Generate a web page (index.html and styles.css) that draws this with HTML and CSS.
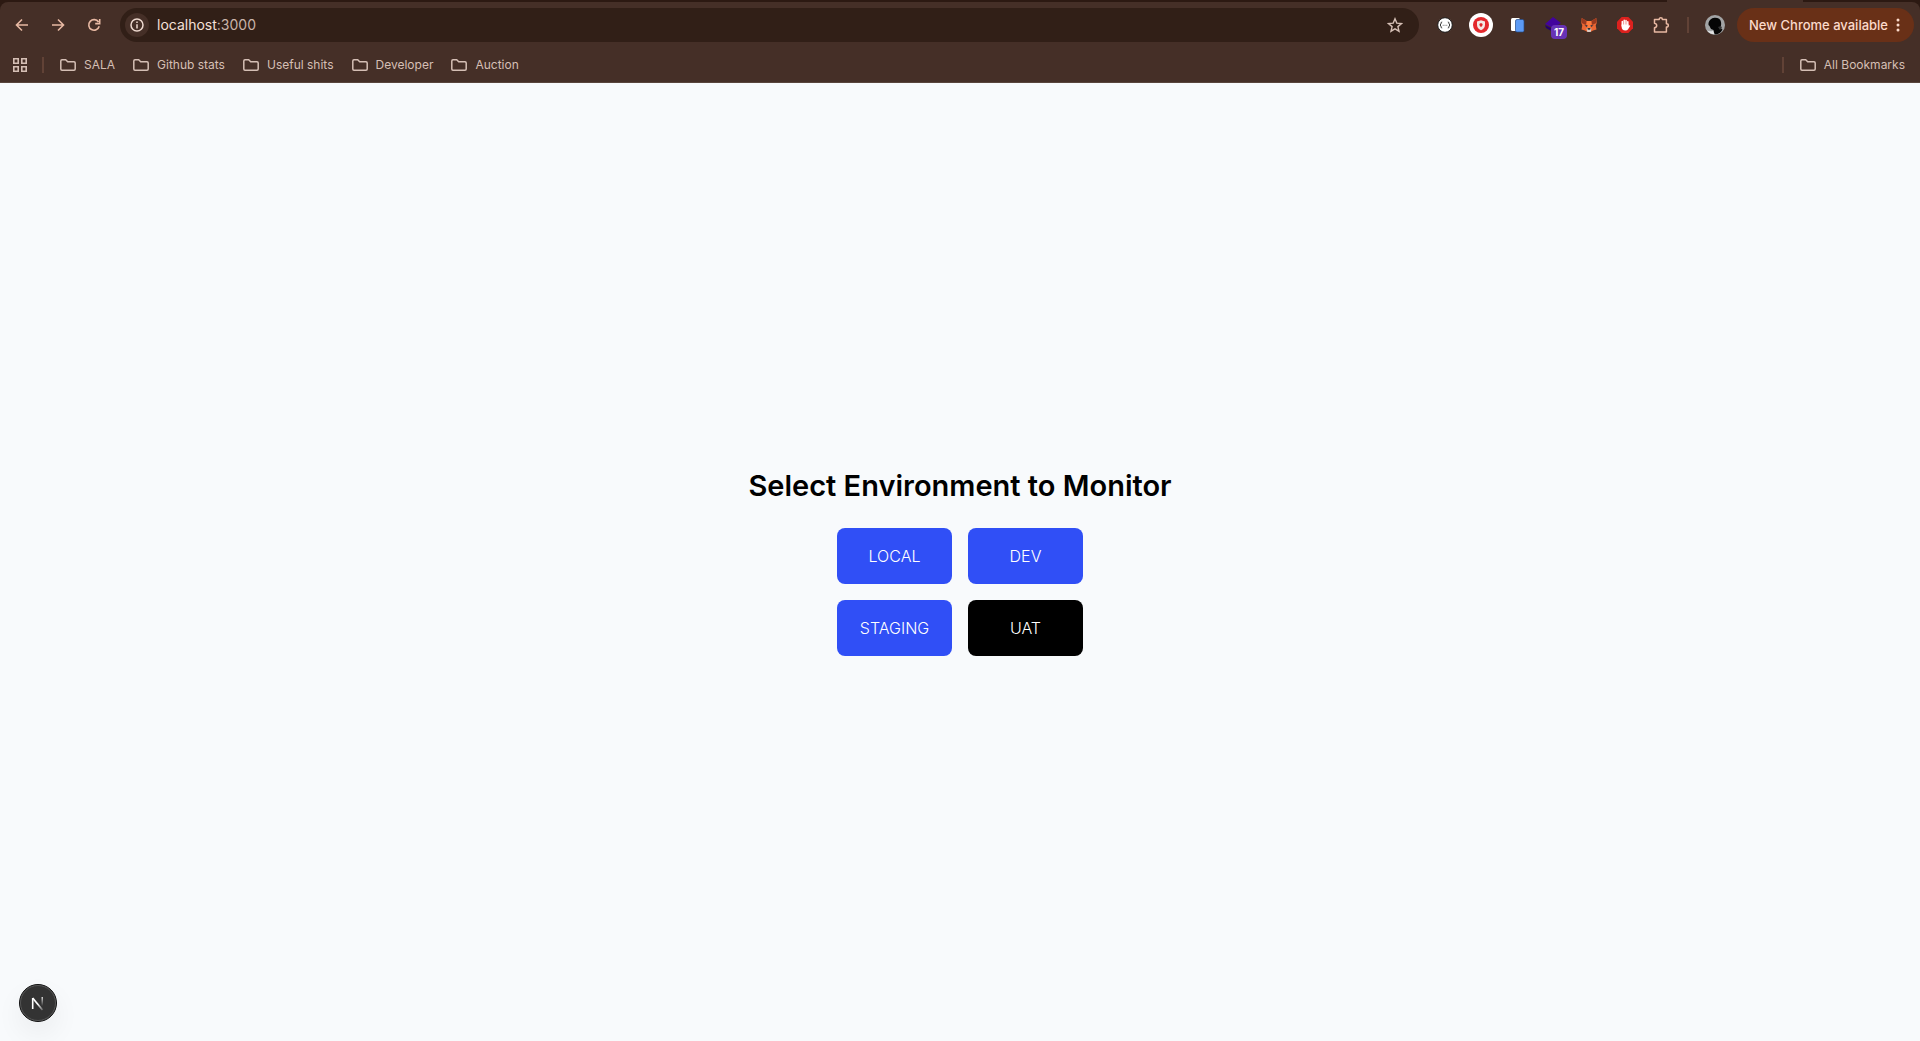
FILE: index.html
```html
<!DOCTYPE html>
<html lang="en">
<head>
<meta charset="utf-8">
<meta name="viewport" content="width=device-width, initial-scale=1">
<title>Select Environment</title>
<link rel="stylesheet" href="styles.css">
</head>
<body>
<svg class="defs" aria-hidden="true">
  <symbol id="folder" viewBox="0 0 16 12"><path d="M.8 10V2q0-1.200 1.200-1.200h3.700l2 2H14q1.200 0 1.200 1.200v6q0 1.200-1.200 1.200H2Q.8 11.200.8 10z" fill="none" stroke="currentColor" stroke-width="1.500"/></symbol>
</svg>
<header class="browser">
  <div class="tabs"><span class="tab"></span></div>
  <div class="chrome">
    <div class="toolbar">
      <nav class="nav" aria-label="History">
        <button class="icon" aria-label="Back"><svg width="14" height="14" viewBox="0 0 14 14"><path d="M13 7H2M7 1.500L1.500 7 7 12.500"/></svg></button>
        <button class="icon" aria-label="Forward"><svg width="14" height="14" viewBox="0 0 14 14"><path d="M1 7h11M7 1.500L12.500 7 7 12.500"/></svg></button>
        <button class="icon" aria-label="Reload"><svg width="14" height="14" viewBox="0 0 14 14"><path d="M12.200 8.300a5.300 5.300 0 1 1-.7-4.300M12.700 1v4.600H8.200"/></svg></button>
      </nav>
      <div class="omnibox">
        <button class="info" aria-label="Site information"><svg width="14" height="14" viewBox="0 0 14 14" fill="none" stroke="currentColor" stroke-width="1.500"><circle cx="7" cy="7" r="6"/><path d="M7 6.200v4.200M7 3.500v1.500"/></svg></button>
        <div class="url">localhost<span>:3000</span></div>
        <button class="star" aria-label="Bookmark this tab"><svg width="16" height="16" viewBox="0 0 16 16" fill="none" stroke="currentColor" stroke-width="1.400"><path d="M8 1.800l1.800 4.300 4.700.4-3.600 3.100 1.100 4.600L8 11.800l-4 2.400 1.100-4.600L1.500 6.500l4.700-.4z"/></svg></button>
      </div>
      <div class="extensions">
        <button class="ext" aria-label="JSON viewer"><svg width="16" height="16" viewBox="0 0 16 16"><circle cx="8" cy="8" r="7.300" fill="#fff" stroke="#1c1c1c"/><path d="M5.200 5Q4 5 4 6v1L3 8l1 1v1q0 1 1.200 1M10.800 5Q12 5 12 6v1l1 1-1 1v1q0 1-1.200 1" fill="none" stroke="#222" stroke-width=".9"/><path d="M5.700 8.300h1M7.500 8.300h1M9.300 8.300h1" stroke="#555" stroke-width=".8"/></svg></button>
        <button class="ext" aria-label="Security extension"><svg width="24" height="24" viewBox="0 0 24 24"><circle cx="12" cy="12" r="12" fill="#fff"/><circle cx="12" cy="12" r="8" fill="#e3292d"/><path d="M12 7.200l4 1.300v3.200q0 3.500-4 5.500-4-2-4-5.500V8.500z" fill="#f3e9e6"/><path d="M12 10l1.700 1-.5 2-1.200 1-1.200-1-.5-2z" fill="#df2b2c"/></svg></button>
        <button class="ext" aria-label="Copy extension"><svg width="16" height="16" viewBox="0 0 16 16"><rect x="2" y="1" width="9" height="13" rx="1.500" fill="#fff"/><path d="M8 2.500h5.500q1.500 0 1.500 1.500v9.500q0 1.500-1.500 1.500H8q-1.500 0-1.500-1.500V4Q6.500 2.500 8 2.500z" fill="#5c9af5" stroke="#234a88" stroke-width=".7"/></svg></button>
        <button class="ext" aria-label="Layers extension, 17 items"><svg width="16" height="16" viewBox="0 0 16 16"><path d="M0 8l8 4 8-4v3l-8 4-7-4z" fill="#24006c"/><path d="M8 0l8 6-8 5-8-4z" fill="#42039d"/></svg><span class="badge">17</span></button>
        <button class="ext" aria-label="Wallet"><svg width="16" height="16" viewBox="0 0 16 16"><path d="M.7 1l5 3h4.600l5-3 .4 5-1 2.500.8 4-3.500 1-2.500 1.500h-3L4 13.500l-3.500-1 .8-4L.3 6z" fill="#ec6734"/><path d="M.7 1l5 3-1 4L.8 6zM15.300 1l-5 3 1 4 3.900-2z" fill="#99391f"/><path d="M5.700 4h4.600l-.8 7h-3z" fill="#ff7b3d"/><path d="M3.500 8.500L6.500 8 6 10zM12.500 8.500l-3-.5.5 2z" fill="#2e3443"/><path d="M5.500 11.500h5l-.8 3.500H6.300z" fill="#dac9c0"/><path d="M6.700 11h2.600v1.700H6.700z" fill="#333"/></svg></button>
        <button class="ext" aria-label="Ad blocker"><svg width="16" height="16" viewBox="0 0 16 16"><path d="M4.700 0h6.600L16 4.700v6.600L11.300 16H4.700L0 11.300V4.700z" fill="#dc211e"/><path d="M5.300 9V4.600M7.200 8V3.200M9 8V3.400M10.800 9V4.800" stroke="#fff" stroke-width="1.500" stroke-linecap="round"/><path d="M4.600 7.500h7V9l1-.7q.8 0 .5.800l-2 3.200q-.8 1.300-2.700 1.300-3.800 0-3.800-4z" fill="#fff"/></svg></button>
        <button class="ext puzzle" aria-label="Extensions"><svg width="18" height="18" viewBox="0 0 18 18" fill="none" stroke="currentColor" stroke-width="1.500"><path d="M2.500 3.500h4.700q0-1.700 1.600-1.700t1.600 1.700h4v4.300q1.900 0 1.900 1.600t-1.900 1.600v5H2.500v-4.200q2.200-.4 2.200-2.300T2.500 7.200z" stroke-linejoin="round"/></svg></button>
      </div>
      <span class="divider"></span>
      <button class="profile" aria-label="Profile"><svg width="20" height="20" viewBox="0 0 20 20"><circle cx="10" cy="10" r="10" fill="#a2a4a5"/><path d="M3.500 8q1-4.500 6-5.200 5.500-.3 6.500 4.200.7 4-1.500 6l3 1.500q-2.500 5-8 5l-1-4.500-2.500-1-1.500-3-1-1z" fill="#050505"/><path d="M2 15.500q3 1.500 6 .3l1.500 3.500q-5-.2-7.500-3.800z" fill="#e1e2e3"/><path d="M13 12l3-1 1 2-2 2z" fill="#353535"/></svg></button>
      <button class="update">New Chrome available<svg width="4" height="14" viewBox="0 0 4 14" fill="currentColor"><circle cx="2" cy="2" r="1.500"/><circle cx="2" cy="7" r="1.500"/><circle cx="2" cy="12" r="1.500"/></svg></button>
    </div>
    <nav class="bookmarks" aria-label="Bookmarks">
      <button class="apps" aria-label="Tab groups"><svg width="14" height="14" viewBox="0 0 14 14" fill="none" stroke="currentColor" stroke-width="1.600"><path d="M.8.8h4.400v4.400H.8zM8.800.8h4.400v4.400H8.800zM.8 8.800h4.400v4.400H.8zM8.800 8.800h4.400v4.400H8.800z"/></svg></button>
      <span class="divider"></span>
      <div class="folders">
        <button class="folder"><svg width="16" height="12"><use href="#folder"/></svg>SALA</button>
        <button class="folder"><svg width="16" height="12"><use href="#folder"/></svg>Github stats</button>
        <button class="folder"><svg width="16" height="12"><use href="#folder"/></svg>Useful shits</button>
        <button class="folder"><svg width="16" height="12"><use href="#folder"/></svg>Developer</button>
        <button class="folder"><svg width="16" height="12"><use href="#folder"/></svg>Auction</button>
      </div>
      <span class="divider"></span>
      <button class="folder"><svg width="16" height="12"><use href="#folder"/></svg>All Bookmarks</button>
    </nav>
  </div>
</header>
<main class="page">
  <h1>Select Environment to Monitor</h1>
  <div class="environments">
    <button class="env">LOCAL</button>
    <button class="env">DEV</button>
    <button class="env">STAGING</button>
    <button class="env selected">UAT</button>
  </div>
</main>
<button class="devtools" aria-label="Open Next.js Dev Tools"><svg width="38" height="38" viewBox="0 0 38 38" fill="none">
  <defs><linearGradient id="diag" x1="19" y1="20" x2="24" y2="26" gradientUnits="userSpaceOnUse"><stop stop-color="#fff"/><stop offset="1" stop-color="#fff" stop-opacity=".2"/></linearGradient><linearGradient id="stem" x1="0" y1="13" x2="0" y2="22" gradientUnits="userSpaceOnUse"><stop stop-color="#fff"/><stop offset="1" stop-color="#fff" stop-opacity="0"/></linearGradient></defs>
  <circle cx="19" cy="19" r="18.500" fill="#333" stroke="#111"/><circle cx="19" cy="19" r="17.500" stroke="#555"/>
  <path d="M13.700 25V14" stroke="#fff" stroke-width="1.600"/><path d="M13.700 14l9.800 12" stroke="url(#diag)" stroke-width="1.700"/><path d="M23.800 13v9h-1.200v-9z" fill="url(#stem)"/>
</svg></button>
</body>
</html>
```
FILE: styles.css
```css
* { box-sizing: border-box; }

body {
  margin: 0;
  min-height: 100vh;
  display: flex;
  flex-direction: column;
  background: #f8fafc;
  color: #000;
  font-family: Inter, "Liberation Sans", sans-serif;
}

button {
  border: 0;
  padding: 0;
  background: none;
  color: inherit;
  font: inherit;
  display: flex;
  align-items: center;
  justify-content: center;
}

svg { display: block; flex: none; }
.defs { position: absolute; width: 0; height: 0; }

.browser { background: #2c1912; color: #d5bfb5; }

.tabs {
  height: 2px;
  display: flex;
  justify-content: flex-end;
  padding-right: 117px;
}
.tab { width: 136px; background: #452f27; }

.chrome {
  background: #452f27;
  border-radius: 8px 8px 0 0;
  border-bottom: 1px solid #59453d;
}

.toolbar {
  height: 46px;
  display: flex;
  align-items: center;
  padding: 0 6px 0 8px;
}

.nav { display: flex; gap: 8px; margin-right: 12px; color: #e8b9a3; }
.icon { width: 28px; height: 28px; }
.icon svg { fill: none; stroke: currentColor; stroke-width: 1.6; }

.omnibox {
  flex: 1;
  height: 34px;
  display: flex;
  align-items: center;
  gap: 8px;
  padding: 0 16px 0 5px;
  border-radius: 17px;
  background: #311f17;
}
.info {
  width: 24px;
  height: 24px;
  border-radius: 50%;
  background: #452f27;
  color: #eed9cf;
}
.url { flex: 1; font-size: 14px; line-height: 20px; color: #f5e0d7; }
.url span { color: #c9b3a9; }

.extensions { display: flex; gap: 12px; margin: 0 14px; }
.ext { position: relative; width: 24px; height: 24px; }
.puzzle { color: #e8b9a3; }
.badge {
  position: absolute;
  left: 10px;
  top: 12px;
  width: 16px;
  height: 14px;
  border-radius: 4px;
  background: #6732b5;
  color: #fff;
  font-size: 10px;
  font-weight: 700;
  line-height: 14px;
}

.divider { width: 2px; height: 16px; background: #614236; }
.profile { margin: 0 12px 0 16px; }

.update {
  height: 34px;
  gap: 8px;
  padding: 0 14px 0 12px;
  border-radius: 17px;
  background: #693017;
  color: #fcdacb;
  font-size: 13px;
  font-weight: 500;
}

.bookmarks {
  height: 34px;
  display: flex;
  align-items: center;
  padding: 0 15px 0 13px;
  font-size: 12px;
}
.apps { margin-right: 15px; }
.folders { flex: 1; display: flex; gap: 18px; margin-left: 16px; }
.folder { gap: 8px; line-height: 16px; }
.divider + .folder { margin-left: 16px; }

.page {
  flex: 1;
  display: flex;
  flex-direction: column;
  align-items: center;
  justify-content: center;
  gap: 24px;
}
h1 { margin: 0; font-size: 29px; font-weight: 600; line-height: 36px; }

.environments { display: grid; grid-template-columns: 1fr 1fr; gap: 16px; }
.env {
  min-width: 115px;
  padding: 16px 20px;
  border-radius: 8px;
  background: #304ff6;
  color: #fff;
  font-size: 16px;
  font-weight: 300;
  line-height: 24px;
}
.selected { background: #000; }

.devtools {
  position: fixed;
  left: 19px;
  bottom: 19px;
  border-radius: 50%;
  box-shadow: 0 12px 28px rgb(0 0 0 / 6%);
}
```
